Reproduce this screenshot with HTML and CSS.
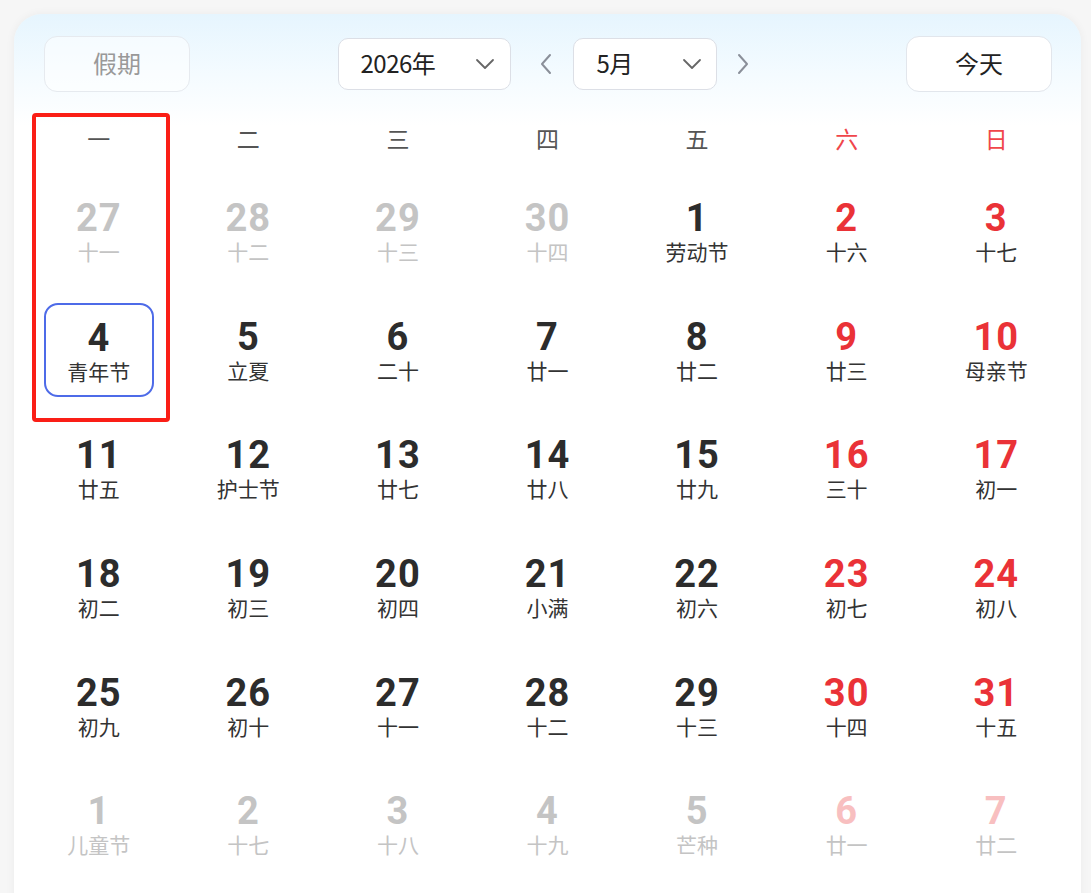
FILE: index.html
```html
<!DOCTYPE html>
<html lang="zh-CN">
<head>
<meta charset="utf-8">
<title>日历</title>
<link rel="stylesheet" href="styles.css">
</head>
<body>
<div class="card">
  <div class="toolbar">
    <button class="btn btn-muted">假期</button>
    <div class="nav">
      <div class="select select-year"><span>2026年</span>
        <svg class="chev" viewBox="0 0 20 12" width="20" height="12"><path d="M2 2 L10 10 L18 2" fill="none" stroke="#666" stroke-width="1.8" stroke-linecap="round" stroke-linejoin="round"/></svg>
      </div>
      <svg class="arrow arrow-prev" viewBox="0 0 12 22" width="12" height="22"><path d="M10 2 L2 11 L10 20" fill="none" stroke="#8a8f99" stroke-width="2" stroke-linecap="round" stroke-linejoin="round"/></svg>
      <div class="select select-month"><span>5月</span>
        <svg class="chev" viewBox="0 0 20 12" width="20" height="12"><path d="M2 2 L10 10 L18 2" fill="none" stroke="#666" stroke-width="1.8" stroke-linecap="round" stroke-linejoin="round"/></svg>
      </div>
      <svg class="arrow arrow-next" viewBox="0 0 12 22" width="12" height="22"><path d="M2 2 L10 11 L2 20" fill="none" stroke="#8a8f99" stroke-width="2" stroke-linecap="round" stroke-linejoin="round"/></svg>
    </div>
    <button class="btn">今天</button>
  </div>

  <div class="grid">
    <div class="wd">一</div><div class="wd">二</div><div class="wd">三</div><div class="wd">四</div><div class="wd">五</div><div class="wd red">六</div><div class="wd red">日</div>

    <div class="cell other"><b>27</b><i>十一</i></div>
    <div class="cell other"><b>28</b><i>十二</i></div>
    <div class="cell other"><b>29</b><i>十三</i></div>
    <div class="cell other"><b>30</b><i>十四</i></div>
    <div class="cell"><b>1</b><i>劳动节</i></div>
    <div class="cell wk"><b>2</b><i>十六</i></div>
    <div class="cell wk"><b>3</b><i>十七</i></div>

    <div class="cell"><div class="sel"><b>4</b><i>青年节</i></div></div>
    <div class="cell"><b>5</b><i>立夏</i></div>
    <div class="cell"><b>6</b><i>二十</i></div>
    <div class="cell"><b>7</b><i>廿一</i></div>
    <div class="cell"><b>8</b><i>廿二</i></div>
    <div class="cell wk"><b>9</b><i>廿三</i></div>
    <div class="cell wk"><b>10</b><i>母亲节</i></div>

    <div class="cell"><b>11</b><i>廿五</i></div>
    <div class="cell"><b>12</b><i>护士节</i></div>
    <div class="cell"><b>13</b><i>廿七</i></div>
    <div class="cell"><b>14</b><i>廿八</i></div>
    <div class="cell"><b>15</b><i>廿九</i></div>
    <div class="cell wk"><b>16</b><i>三十</i></div>
    <div class="cell wk"><b>17</b><i>初一</i></div>

    <div class="cell"><b>18</b><i>初二</i></div>
    <div class="cell"><b>19</b><i>初三</i></div>
    <div class="cell"><b>20</b><i>初四</i></div>
    <div class="cell"><b>21</b><i>小满</i></div>
    <div class="cell"><b>22</b><i>初六</i></div>
    <div class="cell wk"><b>23</b><i>初七</i></div>
    <div class="cell wk"><b>24</b><i>初八</i></div>

    <div class="cell"><b>25</b><i>初九</i></div>
    <div class="cell"><b>26</b><i>初十</i></div>
    <div class="cell"><b>27</b><i>十一</i></div>
    <div class="cell"><b>28</b><i>十二</i></div>
    <div class="cell"><b>29</b><i>十三</i></div>
    <div class="cell wk"><b>30</b><i>十四</i></div>
    <div class="cell wk"><b>31</b><i>十五</i></div>

    <div class="cell other"><b>1</b><i>儿童节</i></div>
    <div class="cell other"><b>2</b><i>十七</i></div>
    <div class="cell other"><b>3</b><i>十八</i></div>
    <div class="cell other"><b>4</b><i>十九</i></div>
    <div class="cell other"><b>5</b><i>芒种</i></div>
    <div class="cell other wk"><b>6</b><i>廿一</i></div>
    <div class="cell other wk"><b>7</b><i>廿二</i></div>
  </div>

  <div class="col-mark"></div>
</div>
</body>
</html>
```

FILE: styles.css
```css
html, body {
  margin: 0;
  padding: 0;
}
body {
  background: #f6f6f6;
  font-family: "Noto Sans CJK SC", "Noto Sans", sans-serif;
  height: 893px;
  overflow: hidden;
}
.card {
  position: relative;
  margin: 14px 10px 0 14px;
  width: 1067px;
  height: 900px;
  box-sizing: border-box;
  padding: 22px 10px 0 10px;
  border-radius: 28px 28px 0 0;
  background: linear-gradient(180deg, #e6f5fe 0px, #f4fbff 60px, #ffffff 112px);
  box-shadow: 0 0 10px rgba(0, 0, 0, 0.05);
}
.toolbar {
  display: flex;
  align-items: center;
  justify-content: space-between;
  padding: 0 19px 0 20px;
  height: 56px;
}
.btn {
  width: 146px;
  height: 56px;
  border: 1px solid #e2e6ec;
  border-radius: 13px;
  background: #ffffff;
  font-family: "Noto Sans CJK SC", sans-serif;
  font-size: 24px;
  color: #222;
  padding: 0 0 4px 0;
}
.btn-muted {
  color: #999;
  background: rgba(255,255,255,0.5);
  border-color: #e6eaef;
}
.nav {
  display: flex;
  align-items: center;
  margin-left: -10px;
}
.select {
  height: 52px;
  box-sizing: border-box;
  border: 1px solid #dcdfe6;
  border-radius: 10px;
  background: #fff;
  display: flex;
  align-items: center;
  justify-content: space-between;
  font-size: 24px;
  color: #222;
}
.select span {
  font-family: "Noto Sans CJK SC", sans-serif;
  letter-spacing: -0.5px;
  padding-bottom: 3px;
}
.select-year {
  width: 173px;
  padding: 0 15px 0 22px;
}
.select-month {
  width: 144px;
  padding: 0 14px 0 23px;
}
.chev {
  display: block;
}
.arrow {
  display: block;
}
.arrow-prev {
  margin: 0 21px 0 29px;
}
.arrow-next {
  margin: 0 0 0 20px;
}
.grid {
  margin-top: 18px;
  display: grid;
  grid-template-columns: repeat(7, 1fr);
  grid-template-rows: 62px repeat(6, 118.6px);
}
.wd {
  display: flex;
  align-items: center;
  justify-content: center;
  font-size: 23px;
  color: #555;
  padding-bottom: 6px;
}
.wd.red {
  color: #f0464b;
}
.cell {
  display: flex;
  flex-direction: column;
  align-items: center;
  justify-content: center;
  color: #2c2c2c;
  padding-top: 2px;
}
.cell b, .sel b {
  font-family: "Roboto", "DejaVu Sans", sans-serif;
  font-weight: 700;
  font-size: 38px;
  line-height: 40px;
  letter-spacing: 1px;
  display: block;
}
.cell i, .sel i {
  font-family: "Liberation Sans", "Noto Sans CJK SC", sans-serif;
  font-style: normal;
  font-size: 21px;
  line-height: 26px;
  margin-top: 2px;
  color: #333;
  display: block;
}
.cell.wk b {
  color: #ea3237;
}
.cell.other b, .cell.other i {
  color: #c4c4c4;
}
.cell.other.wk b {
  color: #f8bfc0;
}
.cell .sel {
  margin-top: -2px;
}
.sel {
  width: 110px;
  height: 94px;
  box-sizing: border-box;
  border: 2px solid #4e6be8;
  border-radius: 14px;
  display: flex;
  flex-direction: column;
  align-items: center;
  justify-content: center;
  padding-top: 4px;
}
.col-mark {
  position: absolute;
  left: 18px;
  top: 99px;
  width: 138px;
  height: 309px;
  box-sizing: border-box;
  border: 4px solid #fa1e16;
  border-radius: 4px;
  pointer-events: none;
}
```
